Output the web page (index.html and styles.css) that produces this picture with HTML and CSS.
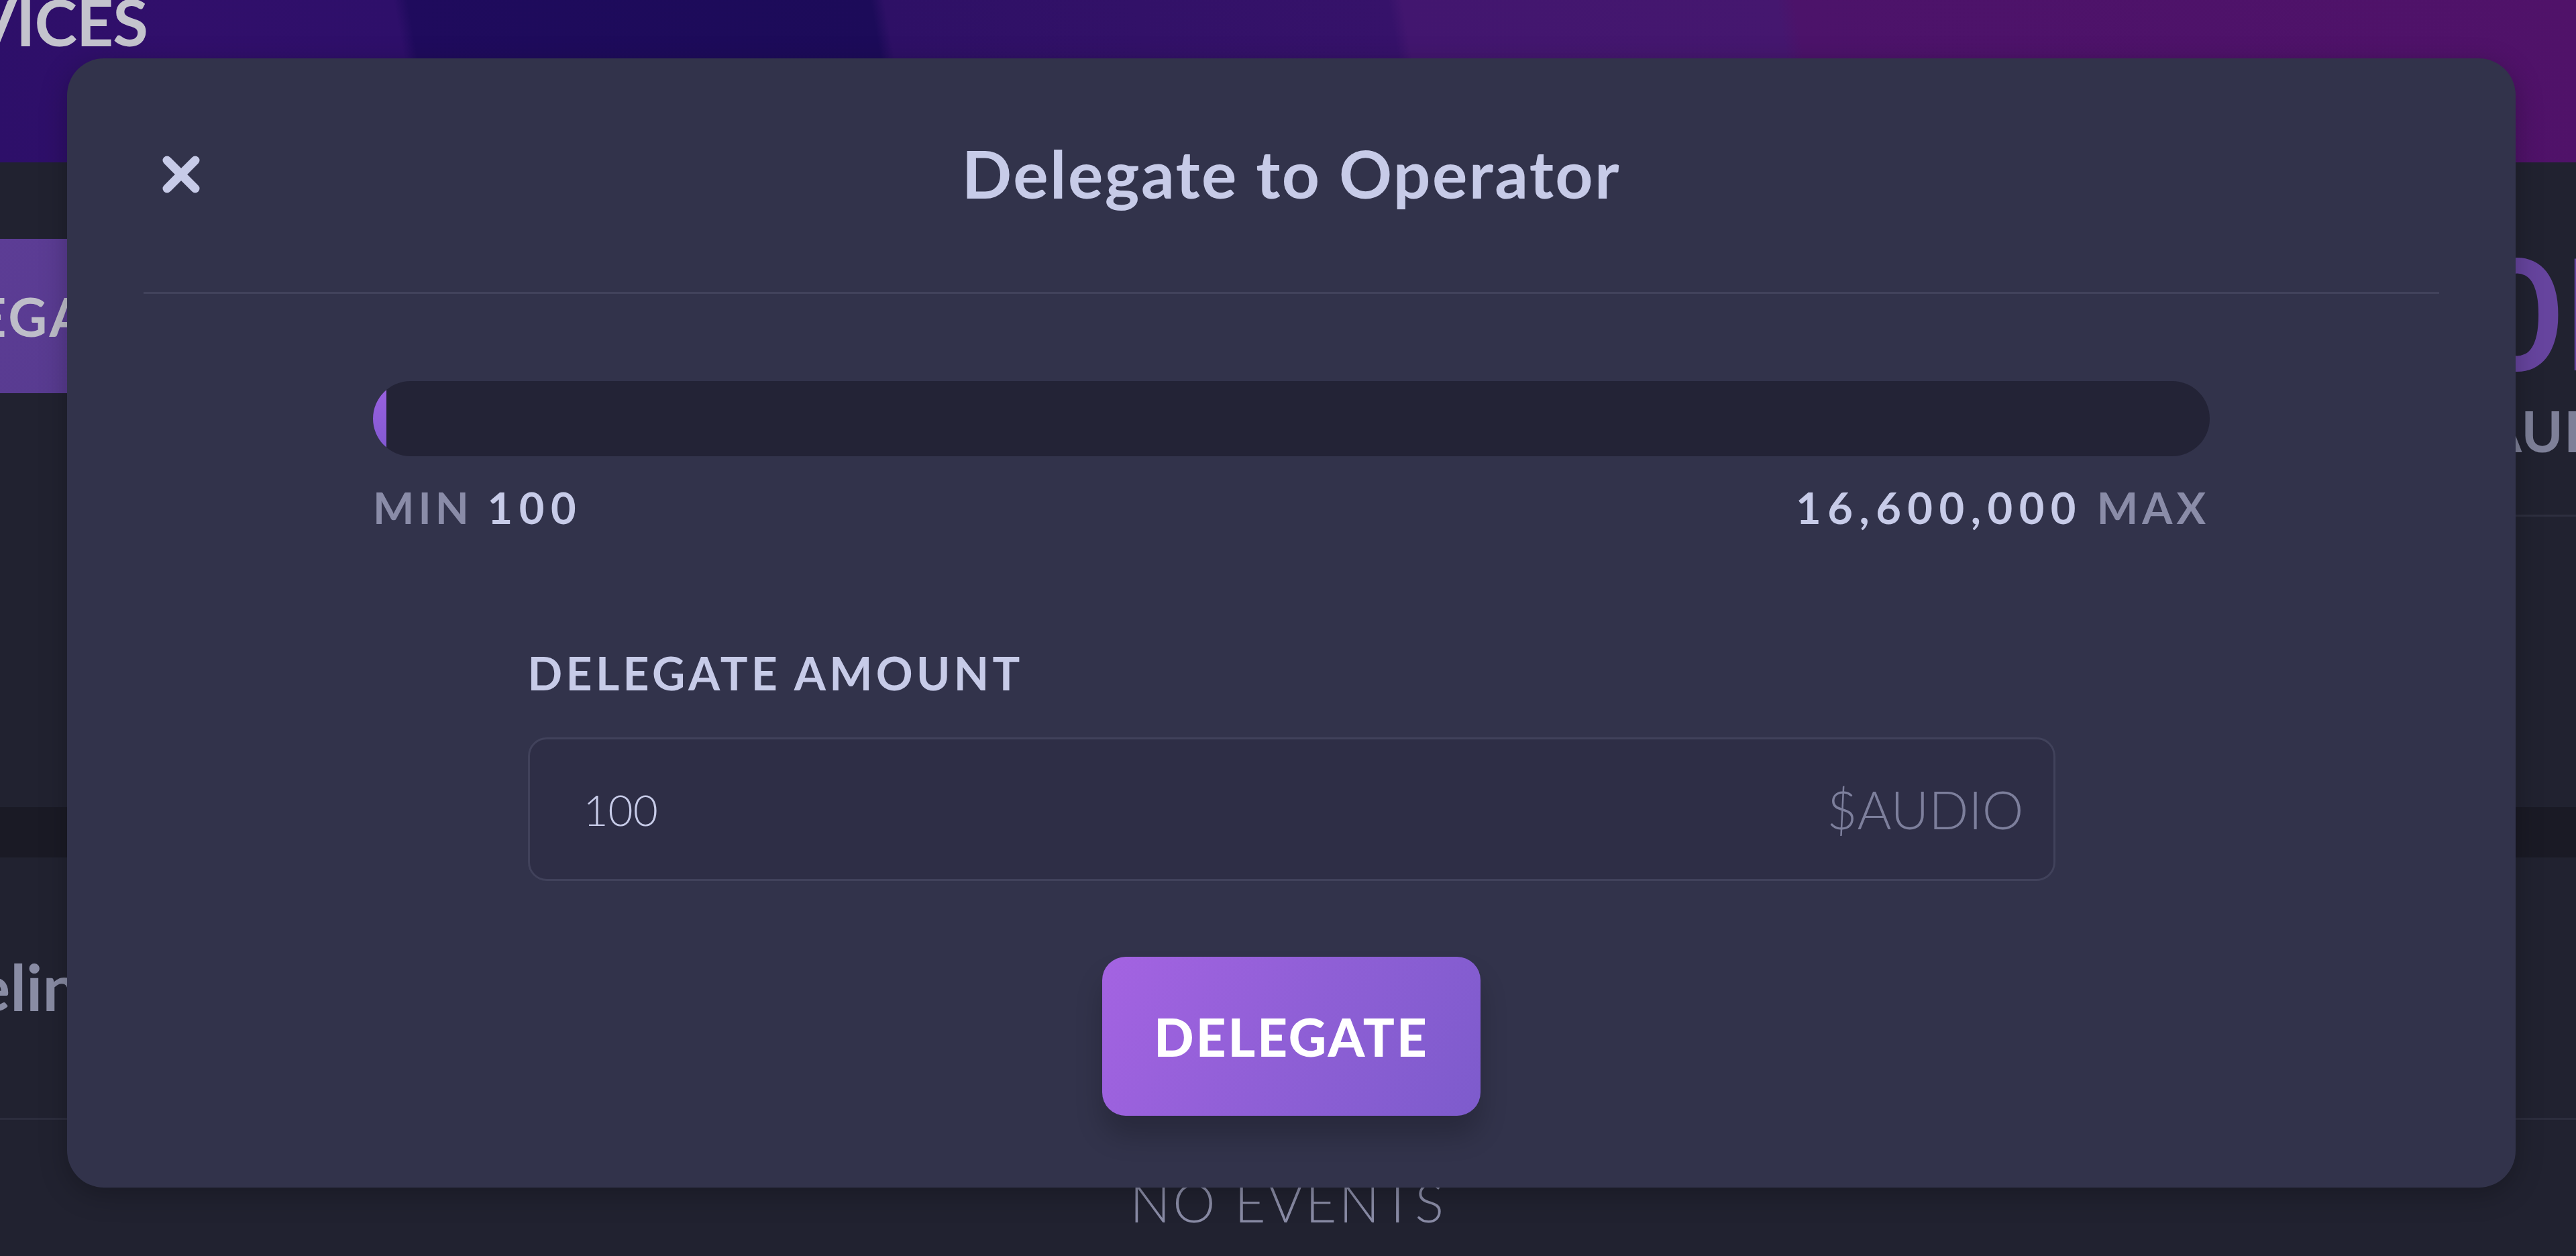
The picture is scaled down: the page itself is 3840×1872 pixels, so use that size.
FILE: index.html
```html
<!DOCTYPE html>
<html lang="en">
<head>
<meta charset="utf-8">
<title>Delegate to Operator</title>
<link rel="stylesheet" href="styles.css">
</head>
<body>
<div class="page">
  <header class="banner">
    <h1 class="banner-title">SERVICES</h1>
  </header>
  <section class="top-card">
    <button class="bg-delegate">DELEGATE</button>
    <div class="stats">
      <div class="stats-value">100M</div>
      <div class="stats-unit">$AUDIO</div>
    </div>
  </section>
  <div class="band"></div>
  <section class="timeline-card">
    <h2 class="timeline-title">Timeline</h2>
    <div class="timeline-divider"></div>
    <div class="no-events">NO EVENTS</div>
  </section>
</div>

<div class="overlay">
  <div class="modal">
    <div class="modal-header">
      <button class="close" aria-label="Close">
        <svg viewBox="0 0 60 60" width="60" height="60">
          <path d="M9 9 L51 51 M51 9 L9 51" stroke="#c7cbe8" stroke-width="13" stroke-linecap="round" fill="none"/>
        </svg>
      </button>
      <div class="modal-title">Delegate to Operator</div>
      <div></div>
    </div>
    <div class="modal-body">
      <div class="range">
        <div class="track"><div class="fill" style="width: 20px"></div></div>
        <div class="range-labels">
          <div><span class="muted">MIN</span> <span class="strong">100</span></div>
          <div><span class="strong">16,600,000</span> <span class="muted">MAX</span></div>
        </div>
      </div>
      <div class="field">
        <div class="field-label">DELEGATE AMOUNT</div>
        <div class="input">
          <span class="input-value">100</span>
          <span class="input-unit">$AUDIO</span>
        </div>
      </div>
      <button class="btn">DELEGATE</button>
    </div>
  </div>
</div>
</body>
</html>
```

FILE: styles.css
```css
* { box-sizing: border-box; margin: 0; padding: 0; }
html, body { width: 3840px; height: 1872px; overflow: hidden; }
body {
  background: #1a1a25;
  font-family: Lato, "Noto Sans", sans-serif;
}
button { border: none; font-family: inherit; cursor: pointer; }

.page { width: 3840px; display: flex; flex-direction: column; }

.banner {
  height: 242px;
  overflow: hidden;
  background: linear-gradient(80deg,
    #2d0f69 0px, #310f6b 300px, #2e0f6a 620px,
    #1f0b5d 640px, #1c0b59 1320px,
    #2e1066 1340px, #36126a 2080px,
    #42166f 2100px, #45176f 2650px,
    #4c136a 2675px, #501269 3840px);
}
.banner-title {
  font-size: 96px;
  font-weight: 700;
  line-height: 1.2;
  color: #c4c4cd;
  letter-spacing: -1px;
  margin-top: -26px;
  margin-left: -206px;
  white-space: nowrap;
}

.top-card {
  height: 961px;
  background: #212230;
  display: flex;
  align-items: flex-start;
}
.bg-delegate {
  margin-left: -260px;
  margin-top: 114px;
  width: 560px;
  height: 230px;
  padding-left: 63px;
  display: flex;
  align-items: center;
  background: linear-gradient(135deg, #603e99, #553a8d);
  color: #bebec9;
  font-size: 80px;
  font-weight: 700;
  letter-spacing: 4px;
}
.stats {
  margin-left: auto;
  width: 421px;
  margin-top: 106px;
  padding-bottom: 74px;
  border-bottom: 3px solid #2e2f3f;
  white-space: nowrap;
}
.stats-value {
  font-size: 230px;
  font-weight: 700;
  line-height: 1;
  color: #66449e;
}
.stats-unit {
  margin-top: 14px;
  padding-left: 232px;
  font-size: 84px;
  font-weight: 700;
  line-height: 1.2;
  letter-spacing: 1px;
  color: #7e8098;
}

.band { height: 75px; background: #1a1a25; }

.timeline-card {
  background: #212230;
  padding-top: 134px;
  height: 594px;
}
.timeline-title {
  font-size: 96px;
  font-weight: 700;
  line-height: 1.2;
  color: #898ca4;
  margin-left: -198px;
}
.timeline-divider {
  margin-top: 139px;
  height: 3px;
  background: #2c2d3d;
}
.no-events {
  margin-top: 74px;
  text-align: center;
  font-size: 80px;
  font-weight: 300;
  line-height: 1.2;
  letter-spacing: 3.5px;
  color: #8a8ca6;
}

/* Modal */
.overlay {
  position: fixed;
  inset: 0;
  padding: 87px 0 0 100px;
}
.modal {
  width: 3650px;
  background: #32334b;
  border-radius: 55px;
  padding: 115px 114px 107px;
  box-shadow: 0 10px 40px rgba(0, 0, 0, 0.25);
}
.modal-header {
  display: grid;
  grid-template-columns: 1fr auto 1fr;
  align-items: center;
  padding-bottom: 117px;
  border-bottom: 3px solid #42435c;
}
.close {
  justify-self: start;
  margin-left: 26px;
  width: 60px;
  height: 60px;
  background: transparent;
  display: flex;
}
.modal-title {
  font-size: 98px;
  font-weight: 700;
  line-height: 1.2;
  letter-spacing: 2.5px;
  color: #c7cbe8;
  margin-top: -2px;
}

.modal-body {
  display: flex;
  flex-direction: column;
  align-items: center;
  padding-top: 130px;
}
.range { width: 2738px; }
.track {
  height: 112px;
  border-radius: 56px;
  background: #232336;
  overflow: hidden;
}
.fill {
  height: 100%;
  background: linear-gradient(180deg, #9c62e2, #7f58d0);
}
.range-labels {
  margin-top: 37px;
  display: flex;
  justify-content: space-between;
  font-size: 65px;
  font-weight: 700;
  line-height: 1.2;
  letter-spacing: 6px;
}
.muted { color: #8a8ca8; }
.strong { color: #c7cbe8; letter-spacing: 9.5px; }

.field { width: 2277px; margin-top: 167px; }
.field-label {
  font-size: 68px;
  font-weight: 700;
  line-height: 1.2;
  letter-spacing: 5.3px;
  color: #c7cbe8;
}
.input {
  margin-top: 56px;
  height: 214px;
  border: 3px solid #41425b;
  border-radius: 28px;
  background: #2e2e46;
  display: flex;
  align-items: center;
  justify-content: space-between;
  padding: 0 44px 0 80px;
}
.input-value {
  font-size: 64px;
  font-weight: 300;
  color: #c7cbe8;
}
.input-unit {
  font-size: 78px;
  font-weight: 300;
  color: #7d7f9c;
}

.btn {
  margin-top: 113px;
  width: 564px;
  height: 237px;
  border-radius: 35px;
  background: linear-gradient(120deg, #a463e2 0%, #8f5fd6 50%, #7d5bcc 100%);
  box-shadow: 0 30px 40px rgba(0, 0, 0, 0.2);
  color: #ffffff;
  font-size: 78px;
  font-weight: 900;
  letter-spacing: 3px;
}
```
